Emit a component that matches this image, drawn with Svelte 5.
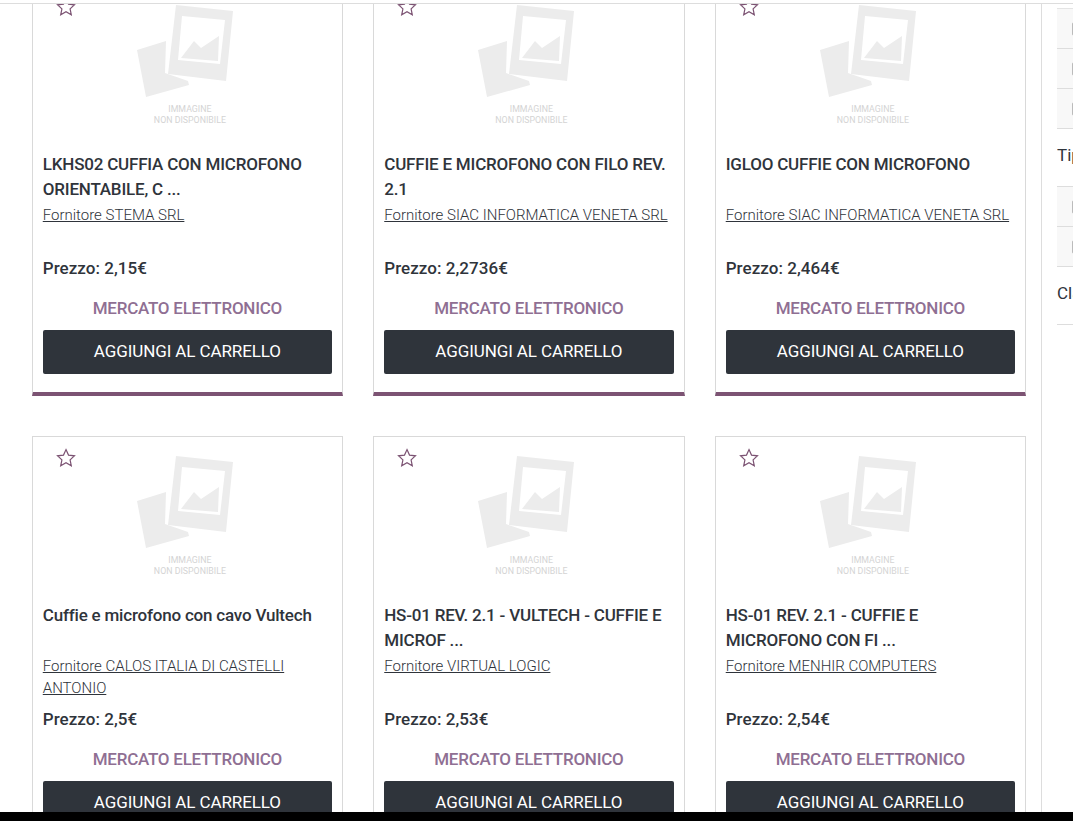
<script>
  const products = [
    { title: 'LKHS02 CUFFIA CON MICROFONO ORIENTABILE, C ...', supplier: 'STEMA SRL', price: '2,15' },
    { title: 'CUFFIE E MICROFONO CON FILO REV. 2.1', supplier: 'SIAC INFORMATICA VENETA SRL', price: '2,2736' },
    { title: 'IGLOO CUFFIE CON MICROFONO', supplier: 'SIAC INFORMATICA VENETA SRL', price: '2,464' },
    { title: 'Cuffie e microfono con cavo Vultech', supplier: 'CALOS ITALIA DI CASTELLI ANTONIO', price: '2,5' },
    { title: 'HS-01 REV. 2.1 - VULTECH - CUFFIE E MICROF ...', supplier: 'VIRTUAL LOGIC', price: '2,53' },
    { title: 'HS-01 REV. 2.1 - CUFFIE E MICROFONO CON FI ...', supplier: 'MENHIR COMPUTERS', price: '2,54' }
  ];
  const groups = [
    { label: '', rows: 3 },
    { label: 'Tipo', rows: 2 },
    { label: 'Classe', rows: 0 }
  ];
</script>

<div class="viewport">
  <div class="scroller">
    <main class="main">
      <div class="grid">
        {#each products as p}
          <article class="card">
            <svg class="star" viewBox="0 0 20 20" aria-hidden="true">
              <path d="M10 1.6l2.500 5.500 6 .7-4.400 4.100 1.200 5.900-5.300-3-5.300 3 1.200-5.900L1.500 7.800l6-.7z" />
            </svg>
            <div class="placeholder">
              <svg class="photo" viewBox="0 0 97 94" aria-hidden="true">
                <path fill-rule="evenodd" d="M39 1L96 7 89 77 31 70zM45 12L41 56 83 60 88 16z" />
                <path d="M44 54L57 37 64 44 82 32 81 57z" />
                <path d="M0 46L29 37 28 69 51 77 52 81 9 93z" />
              </svg>
              <div class="noimg">IMMAGINE<br />NON DISPONIBILE</div>
            </div>
            <h3 class="title">{p.title}</h3>
            <div class="supplier"><a href="#top">Fornitore {p.supplier}</a></div>
            <div class="price">Prezzo: {p.price}€</div>
            <div class="market">MERCATO ELETTRONICO</div>
            <button class="add">AGGIUNGI AL CARRELLO</button>
          </article>
        {/each}
      </div>
    </main>
    <aside class="side">
      {#each groups as g}
        {#if g.label}<div class="label">{g.label}</div>{/if}
        {#each Array(g.rows) as _}
          <div class="opt"><span class="box"></span></div>
        {/each}
      {/each}
    </aside>
  </div>
  <div class="black"></div>
</div>

<style>
  :global(body) {
    margin: 0;
    background: #fff;
  }
  .viewport {
    width: 1073px;
    height: 821px;
    overflow: hidden;
    display: flex;
    flex-direction: column;
    font-family: Roboto, "Noto Sans", sans-serif;
    color: #2f343b;
  }
  .scroller {
    flex: 1;
    min-height: 0;
    overflow: hidden;
    display: flex;
    margin-top: 3px;
    border-top: 1px solid #ddd;
  }
  .black {
    height: 9px;
    background: #000;
    flex: none;
  }
  .main {
    width: 1042px;
    flex: none;
    padding-left: 31.75px;
    box-sizing: border-box;
    border-right: 1px solid #ddd;
  }
  .grid {
    display: grid;
    grid-template-columns: repeat(3, 311.3px);
    column-gap: 30.2px;
    row-gap: 40px;
    margin-top: -19px;
  }
  .card {
    position: relative;
    height: 411px;
    box-sizing: border-box;
    border: 1px solid #d9d9d9;
    border-bottom: 4px solid #7c5373;
    padding: 0 10px;
    display: flex;
    flex-direction: column;
  }
  .star {
    position: absolute;
    left: 23px;
    top: 11px;
    width: 20px;
    height: 20px;
  }
  .star path {
    fill: none;
    stroke: #7c5373;
    stroke-width: 1.2;
  }
  .placeholder {
    height: 166px;
    flex: none;
    display: flex;
    flex-direction: column;
    align-items: center;
    padding-top: 18px;
    box-sizing: border-box;
  }
  .photo {
    width: 97px;
    height: 94px;
    flex: none;
    align-self: flex-start;
    margin-left: 94px;
  }
  .photo path {
    fill: #ececec;
  }
  .noimg {
    font-size: 8.8px;
    line-height: 11px;
    color: #d4d4d4;
    text-align: center;
    margin-top: 6px;
    margin-left: 5px;
  }
  .title {
    margin: 0;
    height: 50px;
    font-size: 17px;
    line-height: 25px;
    font-weight: 500;
    letter-spacing: -0.2px;
  }
  .supplier {
    height: 44px;
    margin-top: 2px;
    font-size: 15px;
    line-height: 22px;
    font-weight: 300;
  }
  .supplier a {
    color: #2f343b;
    text-decoration: underline;
  }
  .price {
    margin-top: 8px;
    font-size: 17px;
    line-height: 24px;
    font-weight: 500;
    letter-spacing: 0.05px;
  }
  .market {
    margin-top: 16px;
    font-size: 17px;
    line-height: 24px;
    font-weight: 500;
    color: #8f6f93;
    text-align: center;
    letter-spacing: -0.25px;
  }
  .add {
    margin-top: 10px;
    height: 44px;
    flex: none;
    border: 0;
    border-radius: 2px;
    background: #2f343b;
    color: #fff;
    font: inherit;
    font-size: 17px;
    padding: 0 0 2px;
    letter-spacing: -0.1px;
  }
  .side {
    flex: 1;
    min-width: 0;
    margin-left: 15px;
    padding-top: 4px;
    font-size: 17px;
    overflow: hidden;
  }
  .opt {
    height: 40px;
    box-sizing: border-box;
    background: #f8f8f8;
    border-bottom: 1px solid #ddd;
    display: flex;
    align-items: center;
    padding-left: 15px;
    white-space: nowrap;
  }
  .opt:first-child {
    height: 41px;
    border-top: 1px solid #e4e4e4;
  }
  .box {
    width: 12px;
    height: 12px;
    border: 1px solid #bbb;
    border-radius: 2px;
    flex: none;
  }
  .label {
    height: 58px;
    box-sizing: border-box;
    padding-top: 14px;
    line-height: 24px;
    border-bottom: 1px solid #ddd;
    white-space: nowrap;
  }
</style>
